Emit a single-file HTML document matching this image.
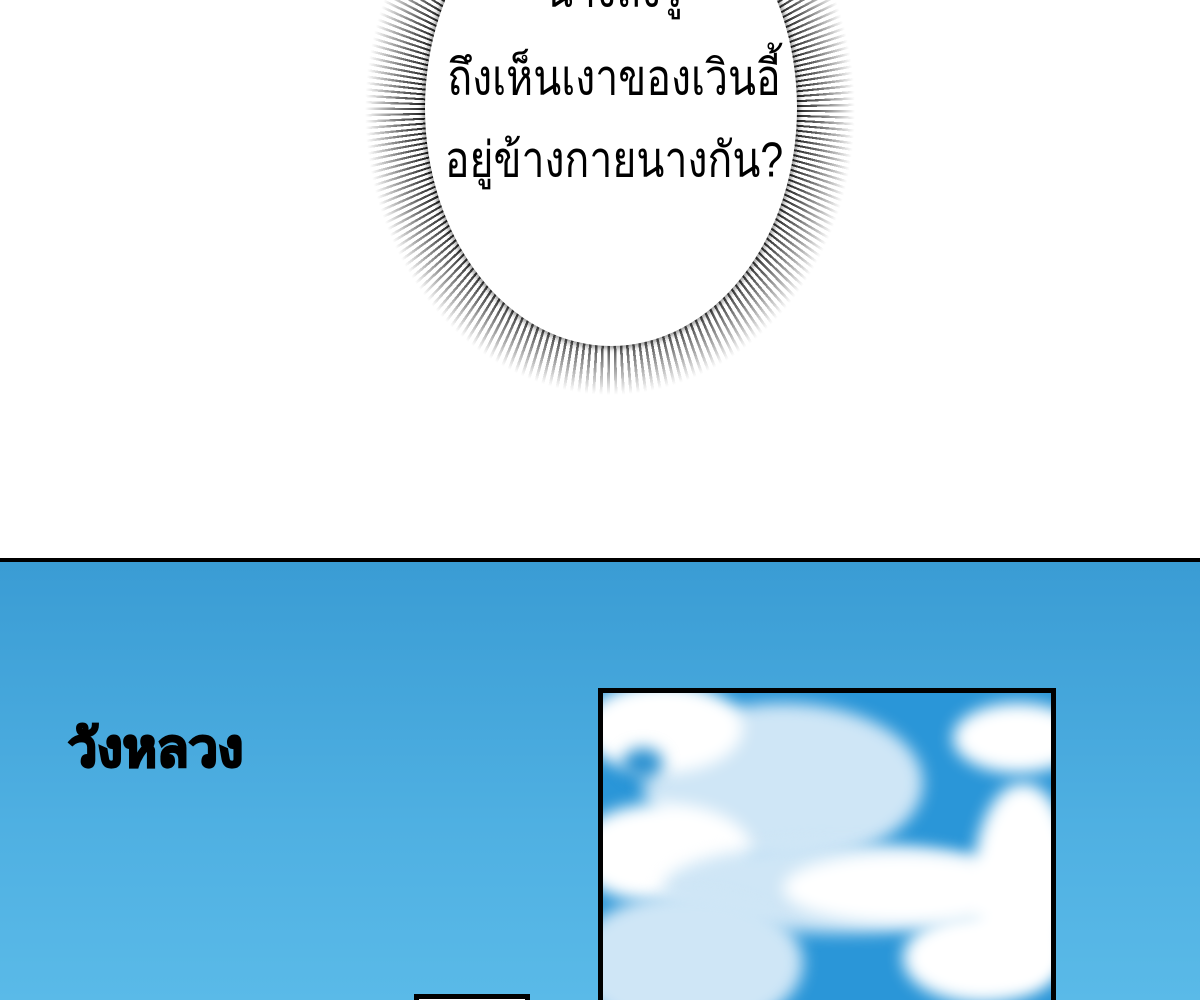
<!DOCTYPE html>
<html><head><meta charset="utf-8"><style>
html,body{margin:0;width:1200px;height:1000px;overflow:hidden}
body{background:#fff;position:relative;font-family:"Liberation Sans","Noto Sans CJK SC",sans-serif}
.spk{position:absolute;left:365px;top:-175px;width:490px;height:570px;border-radius:50%;
background:repeating-conic-gradient(from 0deg at 50% 50%,#000 0deg 0.6deg,transparent 0.6deg 1.5deg);
-webkit-mask:radial-gradient(closest-side,#000 72%,rgba(0,0,0,.6) 85%,transparent 100%);mask:radial-gradient(closest-side,#000 72%,rgba(0,0,0,.6) 85%,transparent 100%)}
.bub{position:absolute;left:425px;top:-130px;width:372px;height:476px;border-radius:50%;background:#fff;box-shadow:0 0 6px 2px rgba(0,0,0,.5)}
.t{position:absolute;left:14px;width:1200px;text-align:center;font-size:41px;color:#000;font-family:"Liberation Sans","Noto Sans CJK SC","WenQuanYi Zen Hei",sans-serif;transform:scaleY(1.2)}
.sky{position:absolute;left:0;top:558px;width:1200px;height:442px;border-top:4px solid #000;background:linear-gradient(#3a9cd4,#4fb0e2 60%,#5abae8)}
.lbl{position:absolute;left:68px;top:706px;font-size:52px;font-weight:bold;color:#000;-webkit-text-stroke:2.5px #000}
.frame{position:absolute;left:598px;top:688px;width:448px;height:320px;border:5px solid #000;background:#2a96d8;overflow:hidden}
.c{position:absolute;border-radius:50%;background:#fff;filter:blur(8px)}
.l{background:#cfe6f6}
</style></head><body>
<div class="spk"></div>
<div class="bub"></div>
<div class="t" style="top:-42px">นางถึงรู้</div>
<div class="t" style="top:46px">ถึงเห็นเงาของเวินอี้</div>
<div class="t" style="top:128px">อยู่ข้างกายนางกัน?</div>
<div class="sky"></div>
<div class="lbl">วังหลวง</div>
<div class="frame">
<div class="c l" style="left:40px;top:10px;width:280px;height:160px"></div>
<div class="c" style="left:-20px;top:-10px;width:160px;height:90px"></div>
<div class="c" style="left:-30px;top:110px;width:180px;height:100px"></div>
<div class="c l" style="left:60px;top:150px;width:360px;height:90px"></div>
<div class="c" style="left:180px;top:160px;width:240px;height:70px"></div>
<div class="c" style="left:350px;top:10px;width:130px;height:70px"></div>
<div class="c" style="left:370px;top:90px;width:100px;height:200px"></div>
<div class="c l" style="left:-30px;top:200px;width:230px;height:140px"></div>
<div class="c" style="left:300px;top:220px;width:160px;height:90px"></div>
<div class="c" style="left:20px;top:55px;width:40px;height:30px;background:#2a90d0"></div>
</div>
<div style="position:absolute;left:414px;top:994px;width:116px;height:10px;background:#000"></div>
<div style="position:absolute;left:419px;top:999px;width:106px;height:5px;background:#fff"></div>
</body></html>
